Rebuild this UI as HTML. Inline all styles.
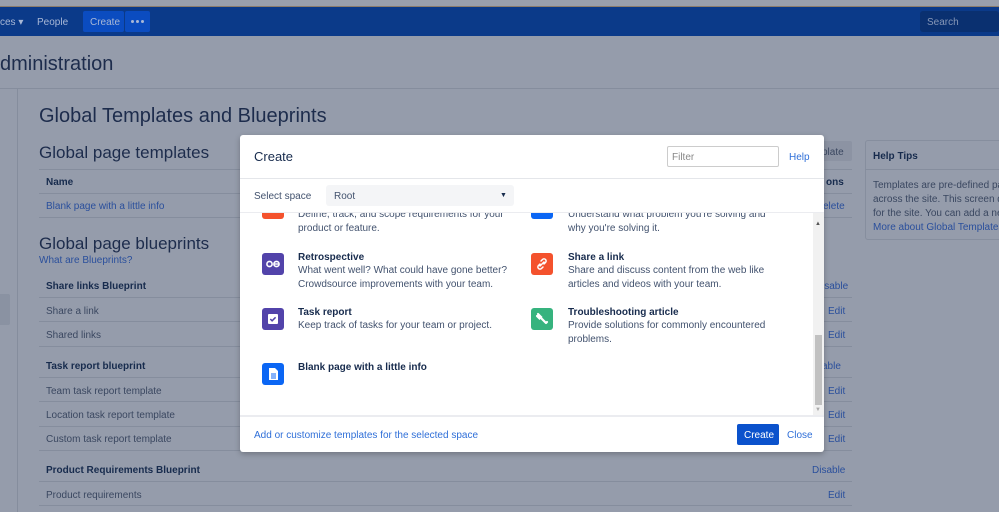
<!DOCTYPE html>
<html><head><meta charset="utf-8"><style>
*{box-sizing:border-box;margin:0;padding:0}
body{width:999px;height:512px;overflow:hidden;position:relative;background:#959cab;font-family:"Liberation Sans",sans-serif;color:#172b4d}
.a{position:absolute;white-space:nowrap}
.t{font-size:10px}
.lk{color:#2a4f9c}
.hl{position:absolute;height:1px;background:#858d9d}
.m{position:absolute;left:240px;top:135px;width:584px;height:317px;background:#fff;border-radius:3px;box-shadow:0 2px 6px rgba(0,0,0,.25)}
.ic{position:absolute;width:22px;height:22px;border-radius:3px}
.ti{font-size:10px;font-weight:bold;color:#172b4d}
.ds{font-size:10px;color:#42526e;line-height:14px}
</style></head><body>
<div class="a" style="left:0;top:0;width:999px;height:7px;background:#9aa0ac"></div>
<div class="a" style="left:0;top:6px;width:999px;height:1px;background:#8c7d6c"></div>
<div class="a" style="left:0;top:7px;width:999px;height:29px;background:#0b3a89"></div>
<div class="a t" style="left:0;top:17px;color:#a9b8d6">ces ▾</div>
<div class="a t" style="left:37px;top:17px;color:#a9b8d6">People</div>
<div class="a" style="left:83px;top:11px;width:41px;height:21px;background:#0b4cc0;border-radius:2px"></div>
<div class="a t" style="left:90px;top:17px;color:#a9b8d6">Create</div>
<div class="a" style="left:125px;top:11px;width:25px;height:21px;background:#0b4cc0;border-radius:2px"></div>
<div class="a" style="left:131px;top:20px;width:3px;height:3px;background:#a9b8d6;border-radius:50%"></div>
<div class="a" style="left:136px;top:20px;width:3px;height:3px;background:#a9b8d6;border-radius:50%"></div>
<div class="a" style="left:141px;top:20px;width:3px;height:3px;background:#a9b8d6;border-radius:50%"></div>
<div class="a" style="left:920px;top:11px;width:79px;height:21px;background:#0a3070;border-radius:3px"></div>
<div class="a t" style="left:927px;top:17px;color:#8797b7">Search</div>
<div class="a" style="left:0;top:53px;font-size:20px;color:#1d2c4c">dministration</div>
<div class="hl" style="left:0;top:88px;width:999px"></div>
<div class="a" style="left:17px;top:89px;width:1px;height:423px;background:#858d9d"></div>
<div class="a" style="left:0;top:294px;width:10px;height:31px;background:#8a92a2;border-radius:0 2px 2px 0"></div>
<div class="a" style="left:39px;top:105px;font-size:20px;color:#1d2c4c">Global Templates and Blueprints</div>
<div class="a" style="left:39px;top:143px;font-size:17px;color:#1d2c4c">Global page templates</div>
<div class="a" style="left:820px;top:141px;width:32px;height:20px;background:#8c93a3;border-radius:2px"></div>
<div class="a t" style="left:822px;top:147px;color:#3a4760">plate</div>
<div class="hl" style="left:39px;top:169px;width:813px"></div>
<div class="a t" style="left:46px;top:177px;font-weight:bold">Name</div>
<div class="a t" style="left:826px;top:177px;font-weight:bold">ons</div>
<div class="hl" style="left:39px;top:193px;width:813px"></div>
<div class="a t lk" style="left:46px;top:201px">Blank page with a little info</div>
<div class="a t lk" style="left:823px;top:201px">elete</div>
<div class="hl" style="left:39px;top:217px;width:813px"></div>
<div class="a" style="left:39px;top:234px;font-size:17px;color:#1d2c4c">Global page blueprints</div>
<div class="a t lk" style="left:39px;top:255px">What are Blueprints?</div>
<div class="a t" style="left:46px;top:281px;font-weight:bold">Share links Blueprint</div><div class="a t lk" style="left:822px;top:281px">isable</div>
<div class="hl" style="left:39px;top:297px;width:813px"></div>
<div class="a t" style="left:46px;top:306px;color:#3a4760">Share a link</div><div class="a t lk" style="left:828px;top:306px">Edit</div>
<div class="hl" style="left:39px;top:321px;width:813px"></div>
<div class="a t" style="left:46px;top:330px;color:#3a4760">Shared links</div><div class="a t lk" style="left:828px;top:330px">Edit</div>
<div class="hl" style="left:39px;top:346px;width:813px"></div>
<div class="a t" style="left:46px;top:361px;font-weight:bold">Task report blueprint</div><div class="a t lk" style="left:822px;top:361px">able</div>
<div class="hl" style="left:39px;top:377px;width:813px"></div>
<div class="a t" style="left:46px;top:386px;color:#3a4760">Team task report template</div><div class="a t lk" style="left:828px;top:386px">Edit</div>
<div class="hl" style="left:39px;top:401px;width:813px"></div>
<div class="a t" style="left:46px;top:410px;color:#3a4760">Location task report template</div><div class="a t lk" style="left:828px;top:410px">Edit</div>
<div class="hl" style="left:39px;top:426px;width:813px"></div>
<div class="a t" style="left:46px;top:434px;color:#3a4760">Custom task report template</div><div class="a t lk" style="left:828px;top:434px">Edit</div>
<div class="hl" style="left:39px;top:450px;width:813px"></div>
<div class="a t" style="left:46px;top:465px;font-weight:bold">Product Requirements Blueprint</div><div class="a t lk" style="left:812px;top:465px">Disable</div>
<div class="hl" style="left:39px;top:481px;width:813px"></div>
<div class="a t" style="left:46px;top:490px;color:#3a4760">Product requirements</div><div class="a t lk" style="left:828px;top:490px">Edit</div>
<div class="hl" style="left:39px;top:505px;width:813px"></div>
<div class="a" style="left:865px;top:140px;width:140px;height:100px;border:1px solid #868e9e;border-radius:3px"></div>
<div class="hl" style="left:865px;top:169px;width:134px"></div>
<div class="a t" style="left:873px;top:151px;font-weight:bold">Help Tips</div>
<div class="a t" style="left:873px;top:179px;color:#3a4760;line-height:14px">Templates are pre-defined pa<br>across the site. This screen dis<br>for the site. You can add a nev<br><span class="lk">More about Global Templates</span></div>

<div class="m">
<div class="a" style="left:14px;top:14px;font-size:13px;color:#172b4d">Create</div>
<div class="a" style="left:427px;top:11px;width:112px;height:21px;border:1px solid #ccc;border-radius:2px"></div>
<div class="a t" style="left:432px;top:17px;color:#888">Filter</div>
<div class="a t" style="left:549px;top:17px;color:#2f6fd8">Help</div>
<div class="a" style="left:0;top:43px;width:584px;height:1px;background:#e4e6ea"></div>
<div class="a t" style="left:14px;top:56px;color:#42526e">Select space</div>
<div class="a" style="left:86px;top:50px;width:188px;height:21px;background:#f4f5f7;border-radius:3px"></div>
<div class="a t" style="left:94px;top:56px;color:#42526e">Root</div>
<div class="a" style="left:260px;top:57px;font-size:7px">▼</div>
<div class="a" style="left:0;top:77px;width:584px;height:1px;background:#ebecf0"></div>
<div style="position:absolute;left:0;top:78px;width:573px;height:202px;overflow:hidden">
<div class="ic" style="left:22px;top:-16px;background:#f4522d"></div>
<div class="a ds" style="left:58px;top:-5px">Define, track, and scope requirements for your<br>product or feature.</div>
<div class="ic" style="left:291px;top:-16px;background:#0b66f4"></div>
<div class="a ds" style="left:328px;top:-5px">Understand what problem you're solving and<br>why you're solving it.</div>
<div class="ic" style="left:22px;top:40px;background:#5243aa"><svg width="22" height="22"><circle cx="7.5" cy="11" r="2.6" fill="none" stroke="#fff" stroke-width="1.6"/><circle cx="14.5" cy="11" r="2.6" fill="none" stroke="#fff" stroke-width="1.6"/><rect x="12.5" y="10.3" width="4" height="1.4" fill="#fff"/></svg></div>
<div class="a ti" style="left:58px;top:39px">Retrospective</div>
<div class="a ds" style="left:58px;top:51px">What went well? What could have gone better?<br>Crowdsource improvements with your team.</div>
<div class="ic" style="left:291px;top:40px;background:#f4522d"><svg width="22" height="22"><path d="M9 13l4-4M10 8l1.5-1.5a2 2 0 013 3L13 11M12 14l-1.5 1.5a2 2 0 01-3-3L9 11" fill="none" stroke="#fff" stroke-width="1.5" stroke-linecap="round"/></svg></div>
<div class="a ti" style="left:328px;top:39px">Share a link</div>
<div class="a ds" style="left:328px;top:51px">Share and discuss content from the web like<br>articles and videos with your team.</div>
<div class="ic" style="left:22px;top:95px;background:#5243aa"><svg width="22" height="22"><rect x="6" y="6" width="10" height="10" rx="1" fill="#fff"/><path d="M8.3 11l1.8 1.8 3.5-3.5" fill="none" stroke="#5243aa" stroke-width="1.5"/></svg></div>
<div class="a ti" style="left:58px;top:94px">Task report</div>
<div class="a ds" style="left:58px;top:106px">Keep track of tasks for your team or project.</div>
<div class="ic" style="left:291px;top:95px;background:#36b37e"><svg width="22" height="22"><path d="M7 6l3 3-1.5 1.5L6 8M9 9l6 6M15 15l1-1M13 13l1.5 1.5" fill="none" stroke="#fff" stroke-width="2.2" stroke-linecap="round"/></svg></div>
<div class="a ti" style="left:328px;top:94px">Troubleshooting article</div>
<div class="a ds" style="left:328px;top:106px">Provide solutions for commonly encountered<br>problems.</div>
<div class="ic" style="left:22px;top:150px;background:#0b66f4"><svg width="22" height="22"><path d="M7 5h6l3 3v9H7z" fill="#fff"/><path d="M9 11h5M9 13h5M9 15h5" stroke="#0b66f4" stroke-width="1"/></svg></div>
<div class="a ti" style="left:58px;top:149px">Blank page with a little info</div>
</div>
<div class="a" style="left:573px;top:78px;width:11px;height:202px;background:#f1f1f1"></div>
<div class="a" style="left:575px;top:200px;width:7px;height:70px;background:#c1c1c1"></div>
<div class="a" style="left:575px;top:86px;font-size:6px;color:#555">▲</div>
<div class="a" style="left:575px;top:272px;font-size:6px;color:#aaa">▼</div>
<div class="a" style="left:0;top:280px;width:584px;height:2px;background:#ebecf0"></div>
<div class="a t" style="left:14px;top:295px;color:#2f6fd8">Add or customize templates for the selected space</div>
<div class="a" style="left:497px;top:289px;width:42px;height:21px;background:#0b52cc;border-radius:2px"></div>
<div class="a t" style="left:504px;top:295px;color:#fff">Create</div>
<div class="a t" style="left:547px;top:295px;color:#2f6fd8">Close</div>
</div>
</body></html>
